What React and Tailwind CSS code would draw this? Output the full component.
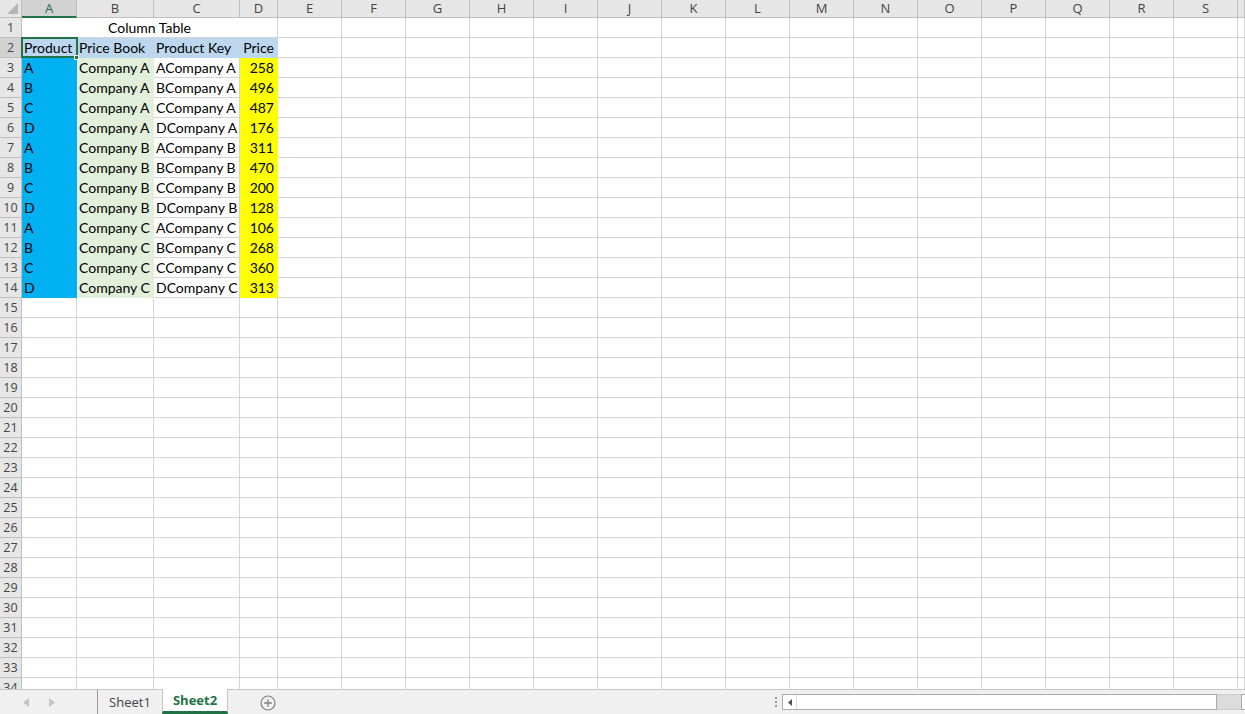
import React from 'react'

// column widths in px: A..S, then a sliver of T
const COLS = [
  { key: 'A', w: 55 },
  { key: 'B', w: 77 },
  { key: 'C', w: 86 },
  { key: 'D', w: 38 },
  ...'EFGHIJKLMNOPQRS'.split('').map((k) => ({ key: k, w: 64 })),
  { key: 'T', w: 7 },
]

const DATA = [
  ['A', 'Company A', 'ACompany A', 258],
  ['B', 'Company A', 'BCompany A', 496],
  ['C', 'Company A', 'CCompany A', 487],
  ['D', 'Company A', 'DCompany A', 176],
  ['A', 'Company B', 'ACompany B', 311],
  ['B', 'Company B', 'BCompany B', 470],
  ['C', 'Company B', 'CCompany B', 200],
  ['D', 'Company B', 'DCompany B', 128],
  ['A', 'Company C', 'ACompany C', 106],
  ['B', 'Company C', 'BCompany C', 268],
  ['C', 'Company C', 'CCompany C', 360],
  ['D', 'Company C', 'DCompany C', 313],
]

const FONT = { fontFamily: 'Lato, "Open Sans", sans-serif' }
const UI_FONT = { fontFamily: '"Open Sans", "Noto Sans", sans-serif' }

function ColHeader() {
  return (
    <div className="flex h-[18px] shrink-0 bg-[#e6e6e6]" style={UI_FONT}>
      <div className="relative w-[22px] shrink-0 border-r border-b border-[#bfbfbf] bg-[#e6e6e6]">
        <svg className="absolute right-[3px] bottom-[3px]" width="11" height="11" viewBox="0 0 11 11">
          <polygon points="11,0 11,11 0,11" fill="#b6b6b6" />
        </svg>
      </div>
      {COLS.map((c) => (
        <div
          key={c.key}
          style={{ width: c.w }}
          className={`flex shrink-0 items-center justify-center overflow-hidden text-[13px] leading-none ${
            c.key === 'A'
              ? 'border-r border-r-[#bfbfbf] border-b-2 border-b-[#217346] bg-[#d2d2d2] text-[#217346]'
              : 'border-r border-b border-[#bfbfbf] text-[#444]'
          }`}
        >
          {c.key === 'T' ? '' : c.key}
        </div>
      ))}
    </div>
  )
}

function RowHead({ n, active }) {
  return (
    <div
      className={`flex w-[22px] shrink-0 items-center justify-center border-r border-b border-[#bfbfbf] pt-[1px] text-[12.5px] text-[#444] ${
        active ? 'bg-[#d2d2d2]' : 'bg-[#e6e6e6]'
      }`}
      style={UI_FONT}
    >
      {n}
    </div>
  )
}

function Cell({ w, children, className = 'border-[#d4d4d4]' }) {
  return (
    <div
      style={{ width: w }}
      className={`flex shrink-0 items-center overflow-hidden whitespace-nowrap border-r border-b px-[2px] text-[14px] text-black ${className}`}
    >
      {children}
    </div>
  )
}

function EmptyCells({ from }) {
  return COLS.slice(from).map((c) => <Cell key={c.key} w={c.w} />)
}

function Row1() {
  return (
    <div className="flex h-[20px] shrink-0">
      <RowHead n={1} />
      <div className="flex w-[256px] shrink-0 items-center justify-center border-r border-b border-[#d4d4d4] text-[14px]">
        Column Table
      </div>
      <EmptyCells from={4} />
    </div>
  )
}

function Row2() {
  const hdr = 'bg-[#bdd7ee] border-[#bdd7ee]'
  return (
    <div className="relative flex h-[20px] shrink-0">
      <RowHead n={2} active />
      <Cell w={55} className={hdr}>Product</Cell>
      <Cell w={77} className={hdr}>Price Book</Cell>
      <Cell w={86} className={hdr}>Product Key</Cell>
      <Cell w={38} className={`${hdr} justify-center`}>Price</Cell>
      <EmptyCells from={4} />
      {/* active cell selection */}
      <div className="pointer-events-none absolute left-[21px] top-[-1px] h-[21px] w-[57px] border-2 border-[#217346]" />
      <div className="absolute left-[74px] top-[17px] h-[5px] w-[5px] border border-white bg-[#217346]" />
    </div>
  )
}

function DataRow({ n, row }) {
  return (
    <div className="flex h-[20px] shrink-0">
      <RowHead n={n} />
      <Cell w={55} className="bg-[#00b0f0] border-[#00b0f0]">{row[0]}</Cell>
      <Cell w={77} className="bg-[#e2efda] border-[#e2efda]">{row[1]}</Cell>
      <Cell w={86}>{row[2]}</Cell>
      <Cell w={38} className="bg-[#ffff00] border-[#ffff00] justify-end pr-[3px]">{row[3]}</Cell>
      <EmptyCells from={4} />
    </div>
  )
}

function EmptyRow({ n }) {
  return (
    <div className="flex h-[20px] shrink-0">
      <RowHead n={n} />
      <EmptyCells from={0} />
    </div>
  )
}

function TabBar() {
  return (
    <div className="flex h-[25px] shrink-0 items-stretch border-t border-[#c6c6c6] bg-[#f0f0f0] text-[13px]" style={UI_FONT}>
      <div className="flex w-[97px] shrink-0 items-center gap-[20px] pl-[23px]">
        <svg width="6" height="9" viewBox="0 0 6 9"><polygon points="6,0 6,9 0,4.5" fill="#c4c4c4" /></svg>
        <svg width="6" height="9" viewBox="0 0 6 9"><polygon points="0,0 0,9 6,4.5" fill="#c4c4c4" /></svg>
      </div>
      <div className="flex w-[65px] shrink-0 items-center justify-center border-l border-[#9a9a9a] pt-[1px] text-[#444]">
        Sheet1
      </div>
      <div className="mt-[-1px] flex w-[66px] shrink-0 items-center justify-center border-x border-[#c6c6c6] border-b-[3px] border-b-[#217346] bg-white pt-[2px] font-bold text-[#217346]">
        Sheet2
      </div>
      <div className="flex w-[80px] shrink-0 items-center justify-center pt-[1px]">
        <svg width="16" height="16" viewBox="0 0 16 16">
          <circle cx="8" cy="8" r="7" fill="none" stroke="#808080" strokeWidth="1.2" />
          <path d="M8 4.2v7.6M4.2 8h7.6" stroke="#808080" strokeWidth="1.3" />
        </svg>
      </div>
      <div className="flex-1" />
      <div className="flex w-[16px] shrink-0 flex-col items-center justify-center gap-[2px]">
        <span className="h-[2px] w-[2px] bg-[#9a9a9a]" />
        <span className="h-[2px] w-[2px] bg-[#9a9a9a]" />
        <span className="h-[2px] w-[2px] bg-[#9a9a9a]" />
      </div>
      <div className="ml-[-2px] flex items-center">
        <div className="flex h-[16px] w-[435px] border border-[#ababab] bg-white">
          <div className="flex w-[14px] items-center justify-center border-r border-[#dadada]">
            <svg width="4" height="7" viewBox="0 0 4 7"><polygon points="4,0 4,7 0,3.5" fill="#505050" /></svg>
          </div>
          <div className="flex-1" />
        </div>
        <div className="h-[16px] w-[24px] border-y border-[#cdcdcd] bg-[#dcdcdc]" />
        <div className="h-[16px] w-[4px] border-l border-y border-[#ababab] bg-white" />
      </div>
    </div>
  )
}

export default function App() {
  return (
    <div className="flex h-[714px] w-[1245px] flex-col overflow-hidden bg-white" style={FONT}>
      <div className="flex h-[689px] flex-col overflow-hidden">
        <ColHeader />
        <Row1 />
        <Row2 />
        {DATA.map((row, i) => (
          <DataRow key={i} n={i + 3} row={row} />
        ))}
        {Array.from({ length: 20 }, (_, i) => (
          <EmptyRow key={i} n={i + 15} />
        ))}
      </div>
      <TabBar />
    </div>
  )
}
